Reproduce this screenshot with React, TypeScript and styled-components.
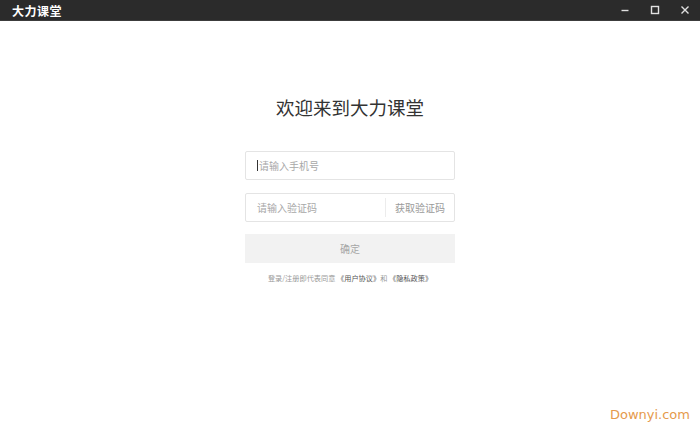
import styled, { createGlobalStyle } from 'styled-components';

const GlobalStyle = createGlobalStyle`
	html, body { margin: 0; padding: 0; background: #ffffff; }
	body { font-family: "Noto Sans CJK SC", "Noto Sans", sans-serif; }
	#root { width: 700px; height: 429px; }
`;

const Window = styled.div`
	width: 700px;
	height: 429px;
	display: flex;
	flex-direction: column;
	background: #ffffff;
	overflow: hidden;
`;
const TitleBar = styled.div`
	height: 20px;
	background: #2b2b2b;
	border-bottom: 1px solid #3c3c3c;
	display: flex;
	align-items: center;
	padding: 0 0 0 12px;
`;
const AppTitle = styled.div`
	color: #ffffff;
	font-size: 12px;
	font-weight: bold;
	letter-spacing: 0.5px;
	flex: 1;
`;
const WinButton = styled.div`
	width: 30px;
	height: 20px;
	display: flex;
	align-items: center;
	justify-content: center;
`;
const Body = styled.div`
	flex: 1;
	display: flex;
	flex-direction: column;
	align-items: center;
	position: relative;
`;
const Heading = styled.h1`
	margin: 73px 0 0 0;
	font-size: 18.5px;
	font-weight: normal;
	color: #333333;
	line-height: 26px;
`;
const Field = styled.div<{ $top: number }>`
	margin-top: ${(p) => p.$top}px;
	width: 208px;
	height: 27px;
	border: 1px solid #e4e4e4;
	border-radius: 2px;
	display: flex;
	align-items: center;
	font-size: 10px;
	color: #a8a8a8;
`;
const Placeholder = styled.div`
	flex: 1;
	padding-left: 11px;
	display: flex;
	align-items: center;
`;
const Caret = styled.span`
	width: 1px;
	height: 11px;
	background: #333333;
	margin-right: 1px;
`;
const CodeButton = styled.div`
	height: 19px;
	border-left: 1px solid #ececec;
	padding: 0 9px 0 9px;
	display: flex;
	align-items: center;
	color: #9a9a9a;
`;
const Submit = styled.div`
	margin-top: 12px;
	width: 210px;
	height: 29px;
	background: #f2f2f2;
	display: flex;
	align-items: center;
	justify-content: center;
	font-size: 10px;
	color: #a6a6a6;
`;
const Agreement = styled.div`
	margin-top: 10px;
	font-size: 7.2px;
	color: #999999;
	white-space: nowrap;
`;
const Link = styled.span`
	color: #555555;
`;
const Watermark = styled.div`
	position: absolute;
	right: 10px;
	bottom: 7px;
	font-family: "DejaVu Sans", sans-serif;
	font-size: 13px;
	color: #e59a4c;
`;

export default function App() {
	return (
		<>
			<GlobalStyle />
			<Window>
				<TitleBar>
					<AppTitle>大力课堂</AppTitle>
					<WinButton>
						<svg width="10" height="10" viewBox="0 0 10 10">
							<path d="M1.5 5.5h7" stroke="#e0e0e0" strokeWidth="1.4" />
						</svg>
					</WinButton>
					<WinButton>
						<svg width="10" height="10" viewBox="0 0 10 10">
							<rect x="1.5" y="1.5" width="7" height="7" fill="none" stroke="#e0e0e0" strokeWidth="1.4" />
						</svg>
					</WinButton>
					<WinButton>
						<svg width="10" height="10" viewBox="0 0 10 10">
							<path d="M1.5 1.5l7 7M8.5 1.5l-7 7" stroke="#e0e0e0" strokeWidth="1.4" />
						</svg>
					</WinButton>
				</TitleBar>
				<Body>
					<Heading>欢迎来到大力课堂</Heading>
					<Field $top={31}>
						<Placeholder>
							<Caret />
							请输入手机号
						</Placeholder>
					</Field>
					<Field $top={13}>
						<Placeholder>请输入验证码</Placeholder>
						<CodeButton>获取验证码</CodeButton>
					</Field>
					<Submit>确定</Submit>
					<Agreement>
						登录/注册即代表同意 <Link>《用户协议》</Link>和 <Link>《隐私政策》</Link>
					</Agreement>
					<Watermark>Downyi.com</Watermark>
				</Body>
			</Window>
		</>
	);
}
